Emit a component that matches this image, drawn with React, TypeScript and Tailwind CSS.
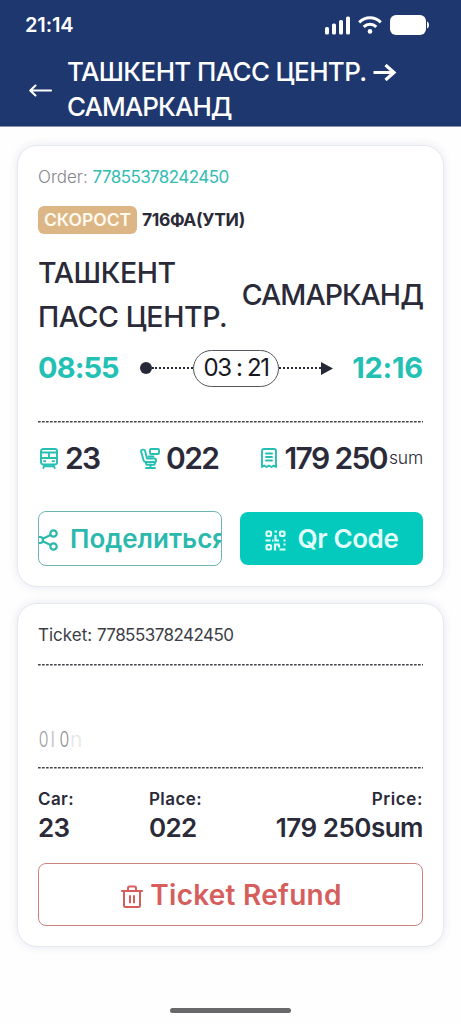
import type { ReactNode } from 'react';

interface InfoItemProps {
  icon: ReactNode;
  value: string;
  className: string;
}

function SignalIcon() {
  return (
    <svg width="25" height="19" viewBox="0 0 25 19" fill="currentColor">
      <rect x="0" y="11" width="4" height="7.5" rx="1.6" />
      <rect x="7" y="7.5" width="4" height="11" rx="1.6" />
      <rect x="14" y="4" width="4" height="14.5" rx="1.6" />
      <rect x="21" y="0.5" width="4" height="18" rx="1.6" />
    </svg>
  );
}

function WifiIcon() {
  return (
    <svg width="24" height="18" viewBox="0 0 24 18" fill="none" stroke="currentColor" strokeWidth="3">
      <path d="M1.2 6.3C7.5 0.3 16.5 0.3 22.8 6.3" />
      <path d="M5.7 10.8c3.7-3.3 8.9-3.3 12.6 0" />
      <circle cx="12" cy="15.4" r="2.3" fill="currentColor" stroke="none" />
    </svg>
  );
}

function BatteryIcon() {
  return (
    <svg width="40" height="20" viewBox="0 0 40 20" fill="currentColor">
      <rect x="0" y="0" width="36" height="20" rx="6" />
      <path d="M37 6.5c2.6 0.7 2.6 6.3 0 7z" />
    </svg>
  );
}

function TrainIcon() {
  return (
    <svg width="18" height="21" viewBox="0 0 18 21" fill="none" stroke="currentColor" strokeWidth="1.9" strokeLinecap="round" strokeLinejoin="round">
      <rect x="1" y="1" width="16" height="15.5" rx="2.2" />
      <path d="M1 4.5h16M1 10h16M9 4.5V10M4 13.2h1.3M12.7 13.2H14M4.5 17l-1.2 3M13.5 17l1.2 3M4 18.3h10" />
    </svg>
  );
}

function SeatIcon() {
  return (
    <svg width="20" height="21" viewBox="0 0 20 21" fill="none" stroke="currentColor" strokeWidth="1.9" strokeLinecap="round" strokeLinejoin="round">
      <rect x="10" y="1" width="9" height="5" rx="1" />
      <path d="M1 3c0-1.500 3.500-2 4-0.500l2 8h7.500c2 0 2 3.500 0 3.500H5.500C4.200 14 3.800 13.500 3.500 12z" />
      <path d="M8.500 8.500h5M5.500 14l1 2.700h8l1-2.700M10.500 16.500V20M6 20h9" />
    </svg>
  );
}

function ReceiptIcon() {
  return (
    <svg width="16" height="20" viewBox="0 0 16 20" fill="none" stroke="currentColor" strokeWidth="1.9" strokeLinecap="round" strokeLinejoin="round">
      <path d="M1 19V3c0-1.400 0.700-2 2-2h10c1.300 0 2 0.600 2 2v16l-2.300-1.500-2.300 1.500L8 17.500l-2.300 1.500L3.300 17.500z" />
      <path d="M5 5.500h6M5 9h6M5 12.500h6" />
    </svg>
  );
}

function ShareIcon() {
  return (
    <svg className="mt-[3px] -ml-[3px] shrink-0" width="22" height="22" viewBox="0 0 22 22" fill="none" stroke="currentColor" strokeWidth="2.2">
      <circle cx="4" cy="11" r="3" />
      <circle cx="17.5" cy="4.5" r="3.2" />
      <circle cx="17.5" cy="17.5" r="3.2" />
      <path d="M6.7 9.7l7.9-3.7M6.7 12.3l7.9 3.7" />
    </svg>
  );
}

function QrIcon() {
  return (
    <svg className="mt-1" width="21" height="21" viewBox="0 0 21 21" fill="none" stroke="currentColor" strokeWidth="2.2">
      <rect x="1.5" y="1.5" width="4.5" height="4.5" rx="1" />
      <rect x="15" y="1.5" width="4.5" height="4.5" rx="1" />
      <rect x="1.5" y="15" width="4.5" height="4.5" rx="1" />
      <path d="M9.5 1.5h2.500M10.500 5v5.500h3.500M0.500 10.500h5M7 10.500h1.500M18.500 10.500h2M10 20.500v-6h4.500M14 14.500v3M18.500 14.500h2M14.500 19.500h6" />
    </svg>
  );
}

function TrashIcon() {
  return (
    <svg className="mt-[4px]" width="22" height="23" viewBox="0 0 22 23" fill="none" stroke="currentColor" strokeWidth="2" strokeLinecap="round" strokeLinejoin="round">
      <path d="M1 6h20M3 6V20.5c0 1 0.5 1.5 1.5 1.5h13c1 0 1.5-0.500 1.500-1.500V6M7 5.500V3C7 2 7.500 1.500 8.500 1.500h5c1 0 1.500 0.500 1.500 1.500V5.500M9 11v6.500M13 11v6.500" />
    </svg>
  );
}

function DashedLine() {
  return (
    <svg className="block w-full" height="2">
      <line x1="0" y1="0.8" x2="100%" y2="0.8" stroke="#45464c" strokeWidth="1.4" strokeDasharray="2.7 1.3" />
    </svg>
  );
}

function InfoItem({ icon, value, className }: InfoItemProps) {
  return (
    <div className={`flex items-center ${className}`}>
      <span className="text-[#26bfb2]">{icon}</span>
      <span className="text-[30px] leading-none font-semibold tracking-[-1.6px]">{value}</span>
    </div>
  );
}

function Header() {
  return (
    <header className="h-[127px] border-b border-[#8792b0] bg-[#1f376f] text-white">
      <div className="flex h-[50px] items-center justify-between pr-[31px] pl-[25px]">
        <span className="text-[20px] font-semibold tracking-[-0.1px]">21:14</span>
        <div className="flex items-center gap-2">
          <SignalIcon />
          <WifiIcon />
          <BatteryIcon />
        </div>
      </div>
      <div className="flex pl-[29px]">
        <svg className="mt-[34px] shrink-0" width="23" height="13" viewBox="0 0 23 13" fill="none" stroke="currentColor" strokeWidth="2" strokeLinecap="round" strokeLinejoin="round">
          <path d="M22 6.5H1.200M6.500 1.500L1.200 6.500l5.300 5" />
        </svg>
        <h1 className="mt-1 ml-[15px] text-[26px] leading-[35px] font-medium whitespace-nowrap">
          <span className="flex items-center">
            <span className="tracking-[-0.65px]">ТАШКЕНТ ПАСС ЦЕНТР.</span>
            <svg className="mt-[2px] ml-[6px]" width="24" height="17" viewBox="0 0 24 17" fill="none" stroke="currentColor" strokeWidth="3.2">
              <path d="M0.500 8.500h20M12.500 1l8.500 7.500-8.500 7.500" />
            </svg>
          </span>
          <span className="block tracking-[-0.95px]">САМАРКАНД</span>
        </h1>
      </div>
    </header>
  );
}

function OrderCard() {
  return (
    <section className="h-[442px] rounded-[20px] border border-[#e6e8ef] bg-white px-5 shadow-[0_0_10px_rgba(40,55,110,0.11)]">
      <div className="mt-[19px] h-6 text-[17px] leading-6 font-light text-[#85868c]">
        <span>Order: </span>
        <span className="font-normal tracking-[-0.58px] text-[#31bdb2]">77855378242450</span>
      </div>
      <div className="mt-[17px] flex h-7 items-center whitespace-nowrap">
        <span className="flex h-7 w-[99px] items-center justify-center rounded-[6px] bg-[#dcb785] text-[17.5px] font-semibold text-[#fffaf0]">СКОРОСТ</span>
        <span className="ml-[5px] text-[17.5px] font-bold tracking-[-0.4px]">716ФА(УТИ)</span>
      </div>
      <div className="mt-[17px] flex h-[87px] items-center justify-between text-[28.5px] leading-[43.5px] font-medium whitespace-nowrap">
        <div className="tracking-[-0.4px]">
          <div>ТАШКЕНТ</div>
          <div>ПАСС ЦЕНТР.</div>
        </div>
        <div className="tracking-[-0.95px]">САМАРКАНД</div>
      </div>
      <div className="mt-[11px] flex h-[38px] items-center justify-between">
        <span className="w-[82px] text-[29px] font-bold tracking-[-0.9px] text-[#23c0b4]">08:55</span>
        <div className="mr-px ml-[2px] flex items-center">
          <span className="size-3 rounded-full bg-[#282938]" />
          <span className="w-[41px] border-t-2 border-dotted border-[#282938]" />
          <span className="flex h-[37px] w-[86px] items-center justify-center rounded-full border border-[#55565c] text-[24px] tracking-[-1.4px] whitespace-pre text-[#17181d]">03 : 21</span>
          <span className="w-[42px] border-t-2 border-dotted border-[#282938]" />
          <svg width="12" height="13" viewBox="0 0 12 13" fill="#282938">
            <path d="M0 0l12 6.5L0 13z" />
          </svg>
        </div>
        <span className="text-[29px] font-bold tracking-[-0.2px] text-[#23c0b4]">12:16</span>
      </div>
      <div className="mt-[34px]">
        <DashedLine />
      </div>
      <div className="mt-[16px] flex h-[38px] items-center">
        <InfoItem icon={<TrainIcon />} value="23" className="ml-0.5 w-[100px] gap-[7px]" />
        <InfoItem icon={<SeatIcon />} value="022" className="w-[115px] gap-[6px]" />
        <div className="ml-auto flex items-center gap-[7px]">
          <span className="text-[#26bfb2]"><ReceiptIcon /></span>
          <span className="flex items-center whitespace-nowrap">
            <span className="text-[30px] leading-none font-semibold tracking-[-1.6px]">179 250</span>
            <span className="ml-[2px] text-[17.5px] font-light tracking-[-0.2px]">sum</span>
          </span>
        </div>
      </div>
      <div className="mt-[34px] flex gap-[18px]">
        <button className="flex h-[55px] w-[184px] shrink-0 items-center gap-3 overflow-hidden rounded-[8px] border border-[#6fb5b2] text-[26px] font-semibold whitespace-nowrap text-[#2bb9ad]">
          <ShareIcon />
          Поделиться
        </button>
        <button className="mt-px flex h-[53px] w-[183px] items-center justify-center gap-3 rounded-[8px] bg-[#03cabc] text-[26px] font-semibold tracking-[-0.4px] whitespace-nowrap text-[#e2fffc]">
          <QrIcon />
          Qr Code
        </button>
      </div>
    </section>
  );
}

function TicketCard() {
  return (
    <section className="mt-4 h-[344px] rounded-[20px] border border-[#e6e8ef] bg-white px-5 shadow-[0_0_10px_rgba(40,55,110,0.11)]">
      <div className="mt-[19px] h-6 text-[17px] leading-6 text-[#3d3e46]">
        Ticket: <span className="tracking-[-0.55px]">77855378242450</span>
      </div>
      <div className="mt-[17px]">
        <DashedLine />
      </div>
      {/* Passenger name, mostly erased */}
      <div className="flex h-[101px] items-end pb-[11px] text-[21px] leading-8 font-light">
        <span className="-ml-px w-[13px] scale-x-75 text-[#9a9b9e]">0</span>
        <span className="w-[8px] text-[#c5c5c8]">I</span>
        <span className="w-[12px] scale-x-75 text-[#8a8b8e]">0</span>
        <span className="text-[#e6e6e7]">n</span>
      </div>
      <DashedLine />
      <div className="mt-[18px] flex leading-6">
        <div className="w-[111px]">
          <div className="text-[17px] font-semibold tracking-[0.4px]">Car:</div>
          <div className="mt-[2px] text-[26px] leading-[30px] font-semibold tracking-[-0.8px]">23</div>
        </div>
        <div>
          <div className="text-[17px] font-semibold tracking-[0.4px]">Place:</div>
          <div className="mt-[2px] text-[26px] leading-[30px] font-semibold tracking-[-0.7px]">022</div>
        </div>
        <div className="ml-auto text-right">
          <div className="text-[17px] font-semibold tracking-[0.6px]">Price:</div>
          <div className="mt-[2px] text-[26px] leading-[30px] font-semibold tracking-[-0.5px]">179 250sum</div>
        </div>
      </div>
      <button className="mt-[20px] flex h-[63px] w-full items-center justify-center gap-[7px] rounded-[8px] border border-[#cb8480] pl-[2px] text-[28px] font-semibold tracking-[0.25px] whitespace-nowrap text-[#d65f5d]">
        <TrashIcon />
        Ticket Refund
      </button>
    </section>
  );
}

export default function App() {
  return (
    <div className="flex h-[1024px] w-[461px] flex-col overflow-hidden bg-[#fefefe] font-['Inter','Liberation_Sans',sans-serif] text-[#2a2a38]">
      <Header />
      <main className="flex-1 px-[17px] pt-[18px]">
        <OrderCard />
        <TicketCard />
      </main>
      <div className="mx-auto mb-[11px] h-[5px] w-[121px] rounded-full bg-[#68686a]" />
    </div>
  );
}
